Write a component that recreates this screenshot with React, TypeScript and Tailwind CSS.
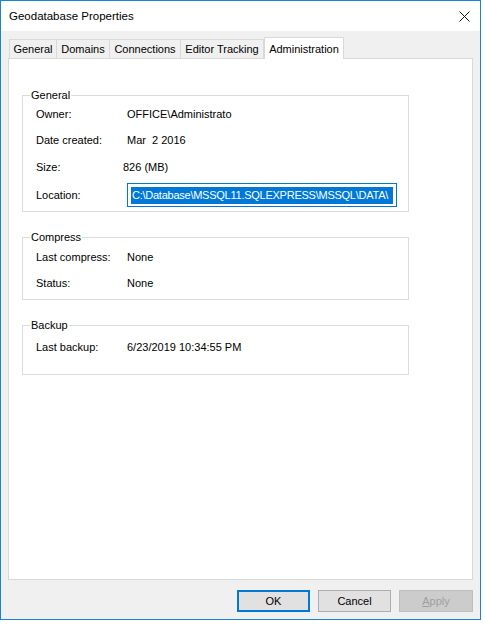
import React from 'react';

const font = "font-['Liberation_Sans',Arial,sans-serif]";

function Row({ label, value, valueClass = 'pl-[104px]', h = 'h-[27px]' }: { label: string; value: React.ReactNode; valueClass?: string; h?: string }) {
  return (
    <div className={`flex items-center ${h} relative`}>
      <span className="absolute left-[13px]">{label}</span>
      <span className={valueClass}>{value}</span>
    </div>
  );
}

function Group({ title, className, children }: { title: string; className: string; children: React.ReactNode }) {
  return (
    <div className={`relative border border-[#dcdcdc] w-[387px] ${className}`}>
      <span className="absolute -top-[8px] left-[7px] bg-white px-[1px] leading-[14px]">{title}</span>
      {children}
    </div>
  );
}

export default function App() {
  const tabs = ['General', 'Domains', 'Connections', 'Editor Tracking'];
  const widths = ['w-[48px]', 'w-[53px]', 'w-[71px]', 'w-[83px]'];
  return (
    <div className={`w-[485px] h-[624px] bg-white ${font} text-[11px] text-black`}>
      <div className="w-[481px] h-[620px] border border-[#1883d7] flex flex-col">
        {/* title bar */}
        <div className="h-[30px] bg-white flex items-center justify-between pl-[8px] pr-[9px]">
          <span className="text-[11.5px] pt-[1px]">Geodatabase Properties</span>
          <svg width="11" height="11" viewBox="0 0 11 11" className="mr-[1px]">
            <path d="M0.5 0.5 L10.5 10.5 M10.5 0.5 L0.5 10.5" stroke="#111" strokeWidth="1" />
          </svg>
        </div>
        {/* body */}
        <div className="flex-1 bg-[#f0f0f0] flex flex-col px-[7px]">
          {/* tabs */}
          <div className="flex items-end h-[27px] pl-[1px]">
            {tabs.map((t, i) => (
              <div key={t} className={`${widths[i]} h-[19px] border border-b-0 border-[#d9d9d9] ${i > 0 ? 'border-l-0' : ''} bg-[#f0f0f0] flex items-center justify-center pt-[1px]`}>
                {t}
              </div>
            ))}
            <div className="w-[80px] h-[22px] -mb-[1px] border border-b-0 border-[#d9d9d9] bg-white flex items-start justify-center pt-[3px] relative z-10">
              Administration
            </div>
          </div>
          {/* panel */}
          <div className="h-[522px] w-[465px] bg-white border border-[#d9d9d9] pl-[13px] pt-[36px]">
            <Group title="General" className="h-[117px] pt-[5px]">
              <Row label="Owner:" value="OFFICE\Administrato" h="h-[26px]" />
              <Row label="Date created:" value={'Mar\u00a0\u00a02 2016'} />
              <Row label="Size:" value="826 (MB)" valueClass="pl-[100px]" />
              <div className="flex items-center h-[28px] relative">
                <span className="absolute left-[13px]">Location:</span>
                <div className="ml-[104px] w-[270px] h-[24px] border border-[#0078d7] flex items-center pl-[3px]">
                  <span className="bg-[#0078d7] text-white h-[17px] leading-[17px] px-[1px] w-[262px] tracking-[-0.25px] whitespace-nowrap overflow-hidden">C:\Database\MSSQL11.SQLEXPRESS\MSSQL\DATA\</span>
                </div>
              </div>
            </Group>
            <Group title="Compress" className="h-[63px] mt-[25px] pt-[6px]">
              <Row label="Last compress:" value="None" h="h-[26px]" />
              <Row label="Status:" value="None" h="h-[26px]" />
            </Group>
            <Group title="Backup" className="h-[50px] mt-[25px] pt-[7px]">
              <Row label="Last backup:" value="6/23/2019 10:34:55 PM" h="h-[28px]" />
            </Group>
          </div>
          {/* buttons */}
          <div className="flex justify-end gap-[8px] pt-[10px] pr-[0px]">
            <button className="w-[73px] h-[22px] bg-[#e1e1e1] border-2 border-[#0078d7] flex items-center justify-center">OK</button>
            <button className="w-[73px] h-[22px] bg-[#e1e1e1] border border-[#adadad] flex items-center justify-center">Cancel</button>
            <button className="w-[74px] h-[22px] bg-[#cccccc] border border-[#bfbfbf] text-[#a0a0a0] flex items-center justify-center">
              <span><span className="underline">A</span>pply</span>
            </button>
          </div>
        </div>
      </div>
    </div>
  );
}
